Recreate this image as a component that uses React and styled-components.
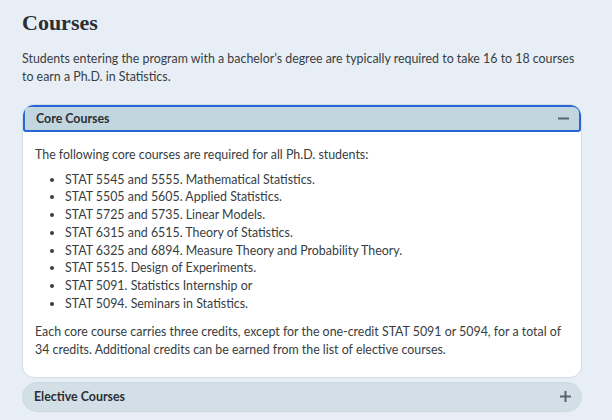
import styled, { createGlobalStyle } from 'styled-components';

const GlobalStyle = createGlobalStyle`
    body {
        margin: 0;
        background: #e8eef5;
        font-family: "Lato", "Liberation Sans", sans-serif;
        color: #383d42;
    }
`;

const coreCourses = [
    'STAT 5545 and 5555. Mathematical Statistics.',
    'STAT 5505 and 5605. Applied Statistics.',
    'STAT 5725 and 5735. Linear Models.',
    'STAT 6315 and 6515. Theory of Statistics.',
    'STAT 6325 and 6894. Measure Theory and Probability Theory.',
    'STAT 5515. Design of Experiments.',
    'STAT 5091. Statistics Internship or',
    'STAT 5094. Seminars in Statistics.',
];

function ToggleIcon({ open }) {
    return (
        <svg width="11" height="11" viewBox="0 0 11 11">
            <rect x="0" y="4.5" width="11" height="2" fill="#56656e" />
            {!open && <rect x="4.5" y="0" width="2" height="11" fill="#56656e" />}
        </svg>
    );
}

export default function App() {
    return (
        <Page>
            <GlobalStyle />
            <Title>Courses</Title>
            <Intro>
                Students entering the program with a bachelor’s degree are typically required to take 16 to 18 courses
                to earn a Ph.D. in Statistics.
            </Intro>
            <Accordion>
                <Panel>
                    <PanelHeader open>
                        <span>Core Courses</span>
                        <ToggleIcon open />
                    </PanelHeader>
                    <PanelBody>
                        <p>The following core courses are required for all Ph.D. students:</p>
                        <CourseList>
                            {coreCourses.map(c => <li key={c}>{c}</li>)}
                        </CourseList>
                        <p>
                            Each core course carries three credits, except for the one-credit STAT 5091 or 5094, for a total of
                            34 credits. Additional credits can be earned from the list of elective courses.
                        </p>
                    </PanelBody>
                </Panel>
                <PanelHeader>
                    <span>Elective Courses</span>
                    <ToggleIcon />
                </PanelHeader>
            </Accordion>
        </Page>
    );
}

const Page = styled.div`
    padding: 8px 30px 0 22px;
`;

const Title = styled.h2`
    margin: 0;
    font-family: "Liberation Serif", serif;
    font-size: 22px;
    font-weight: bold;
    color: #2b2f33;
    line-height: 30px;
`;

const Intro = styled.p`
    margin: 12px 0 0;
    font-size: 12.4px;
    line-height: 17.5px;
`;

const Accordion = styled.div`
    margin-top: 19px;
    display: flex;
    flex-direction: column;
    gap: 4px;
`;

const Panel = styled.div`
    background: #ffffff;
    border: 1px solid #d3dde5;
    border-radius: 12px;
    overflow: hidden;
`;

const PanelHeader = styled.div`
    display: flex;
    align-items: center;
    justify-content: space-between;
    height: ${p => (p.open ? '27px' : '30px')};
    padding: 0 10px 0 11px;
    box-sizing: border-box;
    font-size: 12.4px;
    font-weight: bold;
    color: #2b2f33;
    background: ${p => (p.open ? '#c2d6e0' : '#d3dfe6')};
    border: ${p => (p.open ? '2px solid #2766d4' : '1px solid #ccd8e0')};
    border-radius: ${p => (p.open ? '6px 8px 3px 3px' : '15px')};
`;

const PanelBody = styled.div`
    padding: 14px 12px 18px;
    font-size: 12.4px;
    line-height: 17.7px;
    p {
        margin: 0;
    }
`;

const CourseList = styled.ul`
    margin: 7px 0 11px;
    padding-left: 30px;
`;
